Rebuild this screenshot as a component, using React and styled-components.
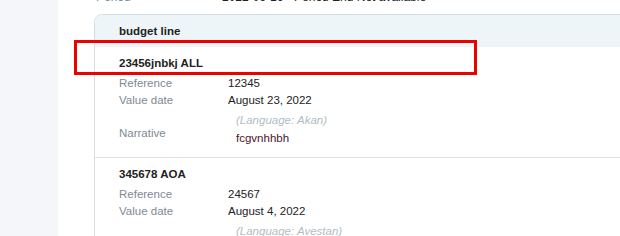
import React from "react";
import styled, { createGlobalStyle } from "styled-components";

const Global = createGlobalStyle`
  html, body { margin: 0; padding: 0; background: #ffffff; }
  body { font-family: "Liberation Sans", Arial, sans-serif; font-size: 11.5px; color: #222; }
  #root { height: 236px; overflow: hidden; }
`;

const Page = styled.div`
  position: relative;
  display: flex;
  height: 236px;
  overflow: hidden;
`;

const Sidebar = styled.div`
  width: 58px;
  flex: none;
  background: #f5f6f9;
`;

const Main = styled.div`
  flex: 1;
  padding-left: 36px;
  overflow: hidden;
`;

const TopRow = styled.div`
  display: grid;
  grid-template-columns: 126px 1fr;
  margin-top: -12px;
  height: 18px;
  line-height: 18px;
  font-size: 12px;
  padding-left: 2px;
  color: #222;
  white-space: nowrap;
`;

const TopLabel = styled.span`
  color: #7d8a96;
`;

const Card = styled.div`
  margin-top: 8px;
  width: 620px;
  border: 1px solid #d6dde3;
  border-radius: 8px;
  overflow: hidden;
`;

const CardHeader = styled.div`
  height: 32px;
  line-height: 33px;
  background: #eef5f8;
  padding-left: 24px;
  font-weight: bold;
  color: #222;
`;

const Item = styled.div`
  padding: 7px 0 10px 24px;
  border-top: ${(p) => (p.$first ? "none" : "1px solid #dde3e8")};
`;

const ItemTitle = styled.div`
  font-weight: bold;
  line-height: 18px;
  margin-bottom: 3px;
  color: #222;
`;

const Row = styled.div`
  display: grid;
  grid-template-columns: 109px 1fr;
  line-height: 17px;
`;

const Label = styled.div`
  color: #7d8a96;
  padding-top: ${(p) => p.$pad || 0}px;
  line-height: 17px;
`;

const Value = styled.div`
  color: #222;
`;

const NarrativeBlock = styled.div`
  padding: 2px 0 0 8px;
  line-height: 18px;
`;

const Lang = styled.div`
  font-style: italic;
  color: #b3bcc4;
`;

const NarrText = styled.div`
  color: #4a1530;
`;

const Highlight = styled.div`
  position: absolute;
  left: 74px;
  top: 40px;
  width: 397px;
  height: 29px;
  border: 3px solid #ee0000;
  pointer-events: none;
`;

const items = [
  {
    title: "23456jnbkj ALL",
    reference: "12345",
    date: "August 23, 2022",
    lang: "Akan",
    narrative: "fcgvnhhbh",
  },
  {
    title: "345678 AOA",
    reference: "24567",
    date: "August 4, 2022",
    lang: "Avestan",
    narrative: "",
  },
];

export default function App() {
  return (
    <>
      <Global />
      <Page>
        <Sidebar />
        <Main>
          <TopRow>
            <TopLabel>Period</TopLabel>
            <span>2022-06-16 - Period End Not available</span>
          </TopRow>
          <Card>
            <CardHeader>budget line</CardHeader>
            {items.map((it, i) => (
              <Item key={it.title} $first={i === 0}>
                <ItemTitle>{it.title}</ItemTitle>
                <Row>
                  <Label>Reference</Label>
                  <Value>{it.reference}</Value>
                </Row>
                <Row>
                  <Label>Value date</Label>
                  <Value>{it.date}</Value>
                </Row>
                <Row>
                  <Label $pad={16}>Narrative</Label>
                  <NarrativeBlock>
                    <Lang>(Language: {it.lang})</Lang>
                    <NarrText>{it.narrative || "\u00a0"}</NarrText>
                  </NarrativeBlock>
                </Row>
              </Item>
            ))}
          </Card>
        </Main>
        <Highlight />
      </Page>
    </>
  );
}
